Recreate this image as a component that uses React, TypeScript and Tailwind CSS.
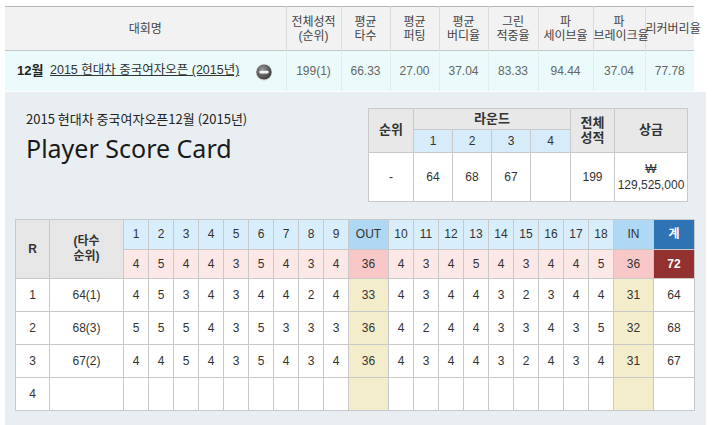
import React from 'react'

const base = "font-['Liberation_Sans','Noto_Sans_CJK_KR',sans-serif]"

const topCols = [281, 55, 49, 49, 49, 50, 55, 52, 49]
const topHeads = [
  ['대회명'],
  ['전체성적', '(순위)'],
  ['평균', '타수'],
  ['평균', '퍼팅'],
  ['평균', '버디율'],
  ['그린', '적중율'],
  ['파', '세이브율'],
  ['파', '브레이크율'],
  ['리커버리율'],
]
const topVals = ['199(1)', '66.33', '27.00', '37.04', '83.33', '94.44', '37.04', '77.78']

const par = [4, 5, 4, 4, 3, 5, 4, 3, 4, 4, 3, 4, 5, 4, 3, 4, 4, 5]
const rounds = [
  { r: '1', t: '64(1)', s: [4, 5, 3, 4, 3, 4, 4, 2, 4, 4, 3, 4, 4, 3, 2, 3, 4, 4], out: '33', inn: '31', tot: '64' },
  { r: '2', t: '68(3)', s: [5, 5, 5, 4, 3, 5, 3, 3, 3, 4, 2, 4, 4, 3, 3, 4, 3, 5], out: '36', inn: '32', tot: '68' },
  { r: '3', t: '67(2)', s: [4, 4, 5, 4, 3, 5, 4, 3, 4, 4, 3, 4, 4, 3, 2, 4, 3, 4], out: '36', inn: '31', tot: '67' },
  { r: '4', t: '', s: Array(18).fill(''), out: '', inn: '', tot: '' },
]

function MinusIcon() {
  return (
    <svg width="18" height="18" viewBox="0 0 18 18">
      <defs>
        <radialGradient id="mg" cx="40%" cy="35%" r="70%">
          <stop offset="0%" stopColor="#9a9a9a" />
          <stop offset="60%" stopColor="#5c5c5c" />
          <stop offset="100%" stopColor="#3a3a3a" />
        </radialGradient>
      </defs>
      <circle cx="9" cy="9.5" r="8.2" fill="#d8d8d8" />
      <circle cx="9" cy="9" r="7.6" fill="url(#mg)" />
      <rect x="4.5" y="7.8" width="9" height="2.6" rx="0.6" fill="#f4f4f4" />
    </svg>
  )
}

export default function App() {
  const cell = 'border border-[#c9c9c9] text-center p-0'
  return (
    <div className={`${base} w-[713px] h-[425px] overflow-hidden bg-white text-[12px] text-[#333] pl-[5px] pt-[6px]`}>
      {/* summary table */}
      <table className="border-collapse table-fixed w-[689px]">
        <colgroup>
          {topCols.map((w, i) => (
            <col key={i} style={{ width: w }} />
          ))}
        </colgroup>
        <thead>
          <tr className="h-[44px] bg-[#f2f2f2] border-t border-[#b5b5b5] border-b border-b-[#c6c6c6]">
            {topHeads.map((h, i) => (
              <th
                key={i}
                className={`font-normal text-[#444] leading-[14px] whitespace-nowrap ${i > 0 ? 'border-l border-[#dcdcdc]' : ''}`}
              >
                {h.map((l, j) => (
                  <div key={j}>{l}</div>
                ))}
              </th>
            ))}
          </tr>
        </thead>
        <tbody>
          <tr className="h-[40px] bg-[#ebfafa]">
            <td className="pl-[12px]">
              <div className="flex items-center">
                <span className="font-bold text-[13px] text-[#222] w-[33px]">12월</span>
                <span className="underline text-[#333] text-[12.5px]">2015 현대차 중국여자오픈 (2015년)</span>
                <span className="ml-[16px] mt-[2px] flex">
                  <MinusIcon />
                </span>
              </div>
            </td>
            {topVals.map((v, i) => (
              <td key={i} className="text-center text-[#666] border-l border-[#e2eeee]">
                {v}
              </td>
            ))}
          </tr>
        </tbody>
      </table>

      {/* score card section */}
      <div className="w-[701px] h-[340px] bg-[#e9eef2] mt-[1px]">
        <div className="flex">
          <div className="pl-[21px] pt-[18px]">
            <div className="text-[13px] text-[#222] font-['Noto_Sans_CJK_KR',sans-serif] leading-[18px]">
              2015 현대차 중국여자오픈12월 (2015년)
            </div>
            <div className="text-[25px] text-[#1a1a1a] font-['Noto_Sans','Noto_Sans_CJK_KR',sans-serif] leading-[32px] mt-[4px]">
              Player Score Card
            </div>
          </div>
          <table className="ml-auto mr-[18px] mt-[16px] border-collapse table-fixed w-[319px] h-[93px] bg-white">
            <colgroup>
              <col style={{ width: 45 }} />
              <col style={{ width: 39 }} />
              <col style={{ width: 39 }} />
              <col style={{ width: 39 }} />
              <col style={{ width: 40 }} />
              <col style={{ width: 44 }} />
              <col style={{ width: 73 }} />
            </colgroup>
            <tbody>
              <tr className="h-[21px]">
                <th rowSpan={2} className={`${cell} bg-[#e8e8e8] font-bold text-[13px]`}>순위</th>
                <th colSpan={4} className={`${cell} bg-[#e8e8e8] font-bold text-[13px]`}>라운드</th>
                <th rowSpan={2} className={`${cell} bg-[#e8e8e8] font-bold text-[13px] leading-[15px]`}>
                  <div>전체</div>
                  <div>성적</div>
                </th>
                <th rowSpan={2} className={`${cell} bg-[#e8e8e8] font-bold text-[13px]`}>상금</th>
              </tr>
              <tr className="h-[23px]">
                {['1', '2', '3', '4'].map((n) => (
                  <td key={n} className={`${cell} bg-[#d7ecfb]`}>{n}</td>
                ))}
              </tr>
              <tr className="h-[49px]">
                <td className={cell}>-</td>
                <td className={cell}>64</td>
                <td className={cell}>68</td>
                <td className={cell}>67</td>
                <td className={cell}></td>
                <td className={cell}>199</td>
                <td className={`${cell} leading-[16px]`}>
                  <div>₩</div>
                  <div>129,525,000</div>
                </td>
              </tr>
            </tbody>
          </table>
        </div>

        <table className="ml-[10px] mt-[17px] border-collapse table-fixed w-[679px] bg-white">
          <colgroup>
            <col style={{ width: 34 }} />
            <col style={{ width: 74 }} />
            {par.slice(0, 9).map((_, i) => (
              <col key={`a${i}`} style={{ width: 25 }} />
            ))}
            <col style={{ width: 40 }} />
            {par.slice(9).map((_, i) => (
              <col key={`b${i}`} style={{ width: 25 }} />
            ))}
            <col style={{ width: 40 }} />
            <col style={{ width: 41 }} />
          </colgroup>
          <tbody>
            <tr className="h-[30px]">
              <th rowSpan={2} className={`${cell} bg-[#e6e6e6] font-bold`}>R</th>
              <th rowSpan={2} className={`${cell} bg-[#e6e6e6] font-bold leading-[15px]`}>
                <div>(타수</div>
                <div>순위)</div>
              </th>
              {par.slice(0, 9).map((_, i) => (
                <td key={i} className={`${cell} bg-[#d9eefc]`}>{i + 1}</td>
              ))}
              <td className={`${cell} bg-[#aed8f4]`}>OUT</td>
              {par.slice(9).map((_, i) => (
                <td key={i} className={`${cell} bg-[#d9eefc]`}>{i + 10}</td>
              ))}
              <td className={`${cell} bg-[#aed8f4]`}>IN</td>
              <td className={`${cell} bg-[#2e74b5] text-white font-bold`}>계</td>
            </tr>
            <tr className="h-[29px]">
              {par.slice(0, 9).map((p, i) => (
                <td key={i} className={`${cell} bg-[#fde8e8]`}>{p}</td>
              ))}
              <td className={`${cell} bg-[#f8c8c8]`}>36</td>
              {par.slice(9).map((p, i) => (
                <td key={i} className={`${cell} bg-[#fde8e8]`}>{p}</td>
              ))}
              <td className={`${cell} bg-[#f8c8c8]`}>36</td>
              <td className={`${cell} bg-[#933131] text-white font-bold`}>72</td>
            </tr>
            {rounds.map((r) => (
              <tr key={r.r} className="h-[33px]">
                <td className={cell}>{r.r}</td>
                <td className={cell}>{r.t}</td>
                {r.s.slice(0, 9).map((v, i) => (
                  <td key={i} className={cell}>{v}</td>
                ))}
                <td className={`${cell} bg-[#f3edcc]`}>{r.out}</td>
                {r.s.slice(9).map((v, i) => (
                  <td key={i} className={cell}>{v}</td>
                ))}
                <td className={`${cell} bg-[#f3edcc]`}>{r.inn}</td>
                <td className={cell}>{r.tot}</td>
              </tr>
            ))}
          </tbody>
        </table>
      </div>
    </div>
  )
}
